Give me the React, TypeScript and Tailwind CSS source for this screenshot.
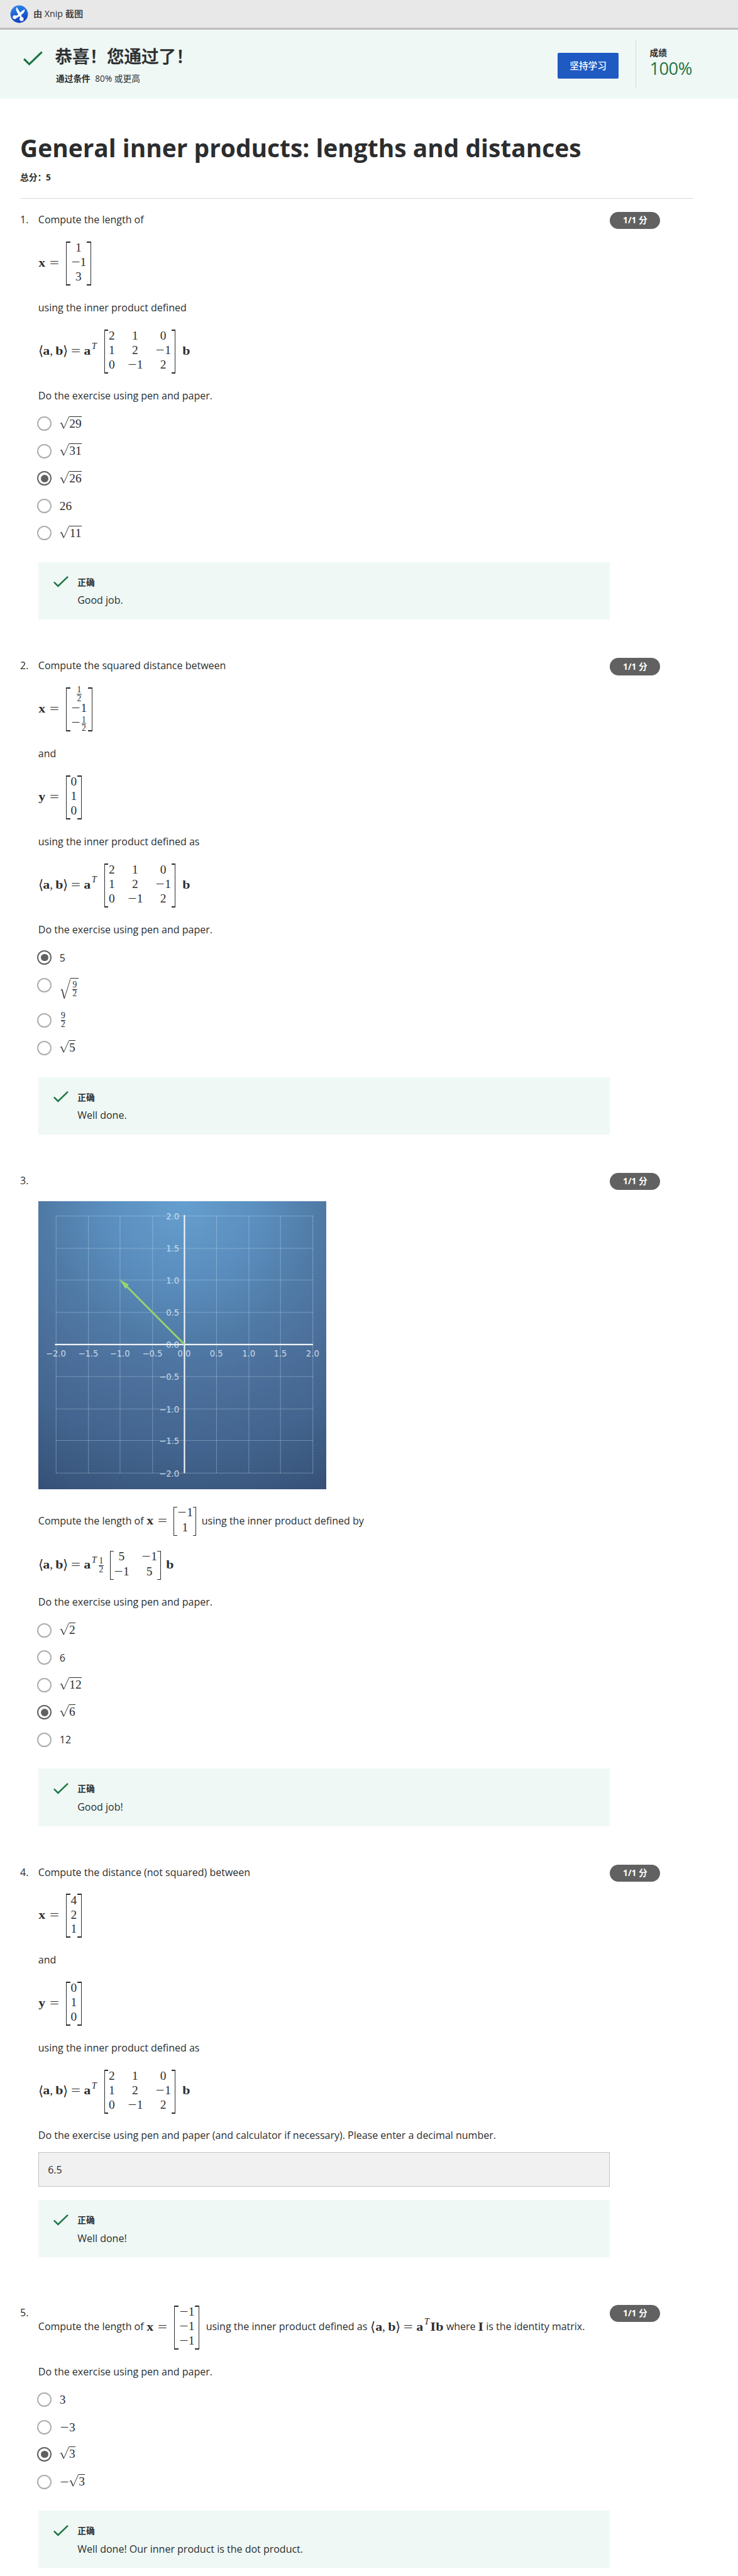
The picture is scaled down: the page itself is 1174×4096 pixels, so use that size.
import type { ReactNode } from 'react';

const SERIF = "font-['Liberation_Serif',serif]";

/* ---------- math primitives ---------- */

function M({ w, children, className = '' }: { w: string; children: ReactNode; className?: string }) {
  return (
    <span className={`${SERIF} ${w} ${className} inline-flex shrink-0 justify-center pb-[3.4px] text-[19.4px] leading-[23px] whitespace-nowrap`}>
      {children}
    </span>
  );
}

function Bold({ children, w = 'w-[12px]', className = '' }: { children: ReactNode; w?: string; className?: string }) {
  return (
    <M w={w} className={`font-bold ${className}`}>
      <span className="inline-block scale-x-[1.13]">{children}</span>
    </M>
  );
}

function Eq({ className = '' }: { className?: string }) {
  return (
    <M w="w-[15.1px]" className={className}>
      <span className="inline-block scale-x-[1.36]">=</span>
    </M>
  );
}

function Minus() {
  return (
    <span className="inline-flex w-[15.1px] shrink-0 justify-center">
      <span className="inline-block scale-x-[1.28]">−</span>
    </span>
  );
}

function Frac({ top, bottom }: { top: string; bottom: string }) {
  return (
    <span className={`${SERIF} inline-flex w-[7.6px] shrink-0 flex-col items-center text-[13.6px] leading-[12px]`}>
      <span className="h-[12.8px]">{top}</span>
      <span className="h-px w-full bg-[#2b2d2f]" />
      <span>{bottom}</span>
    </span>
  );
}

function Cell({ value }: { value: string }) {
  const negative = value.startsWith('-');
  const body = negative ? value.slice(1) : value;
  return (
    <span className="flex items-center justify-center">
      {negative && <Minus />}
      {body === '1/2' ? (
        <span className={`mx-[2px] leading-none ${negative ? 'translate-y-[1.5px]' : '-translate-y-[0.5px]'}`}>
          <span className="flex">
            <Frac top="1" bottom="2" />
          </span>
        </span>
      ) : (
        <span>{body}</span>
      )}
    </span>
  );
}

function Matrix({ rows, small = false, className = '' }: { rows: string[][]; small?: boolean; className?: string }) {
  const cols = rows[0].length;
  const template = cols === 3 ? 'grid-cols-[auto_auto_auto]' : cols === 2 ? 'grid-cols-[auto_auto]' : 'grid-cols-[auto]';
  const side = small ? 'w-[5.6px] border-y-[1.5px]' : 'w-[6.6px] border-y-2';
  return (
    <span className={`${className} inline-flex shrink-0 ${small ? 'h-[46.3px]' : 'h-[70px] gap-[0.8px]'}`}>
      <span className={`${side} border-l-[1.5px] border-[#2b2d2f]`} />
      <span
        className={`${SERIF} ${template} grid ${
          small ? 'auto-rows-[23.8px] gap-x-[19.4px]' : 'auto-rows-[22.9px] gap-x-[19.9px]'
        } content-center pb-[3px] text-[19.4px] leading-[22.9px]`}
      >
        {rows.flat().map((v, i) => (
          <Cell key={i} value={v} />
        ))}
      </span>
      <span className={`${side} border-r-[1.5px] border-[#2b2d2f]`} />
    </span>
  );
}

function Angle({ children }: { children: ReactNode }) {
  return (
    <span className="inline-flex w-[7.5px] shrink-0 justify-center pb-[0.5px] font-['DejaVu_Sans'] text-[21px] leading-[23px] font-extralight">
      {children}
    </span>
  );
}

/* <a, b> = a^T */
function InnerProduct() {
  return (
    <>
      <Angle>⟨</Angle>
      <Bold w="w-[10.8px]">a</Bold>
      <M w="w-[5px]">,</M>
      <Bold w="w-[12.4px]" className="ml-[3.8px]">b</Bold>
      <Angle>⟩</Angle>
      <Eq className="ml-[5.6px]" />
      <Bold w="w-[10.8px]" className="ml-[5.4px]">a</Bold>
      <span className={`${SERIF} inline-flex w-[10.5px] shrink-0 justify-center pb-[18.8px] text-[14.5px] leading-[14px] italic`}>T</span>
    </>
  );
}

function Sqrt({ children, w }: { children: ReactNode; w: string }) {
  return (
    <span className="mb-[4.4px] inline-flex">
      <svg className="h-[20.4px] w-[15px]" viewBox="0 0 15 20.4" fill="none" stroke="#2b2d2f">
        <path d="M0.4 11.6 L2.6 10.2" strokeWidth="0.8" />
        <path d="M2.6 10.2 L6.2 18.8" strokeWidth="1.5" />
        <path d="M6.2 19.6 L14.8 0.5" strokeWidth="0.9" />
      </svg>
      <span className={`${SERIF} ${w} h-[20.4px] border-t border-[#2b2d2f] text-center text-[19.4px] leading-[21.4px]`}>{children}</span>
    </span>
  );
}

function TallSqrt() {
  return (
    <span className="mt-[11px] ml-[1px] inline-flex self-start">
      <svg className="h-[34px] w-[16.6px]" viewBox="0 0 16.6 34" fill="none" stroke="#2b2d2f">
        <path d="M0.4 19.6 L2.6 18" strokeWidth="0.8" />
        <path d="M2.6 18 L6.2 32" strokeWidth="1.5" />
        <path d="M6.2 33.4 L16.4 0.5" strokeWidth="0.9" />
      </svg>
      <span className="flex h-[34px] w-[12.8px] justify-center border-t border-[#2b2d2f] pt-[4px]">
        <Frac top="9" bottom="2" />
      </span>
    </span>
  );
}

function Num({ children }: { children: ReactNode }) {
  return <span className={`${SERIF} inline-flex text-[19.4px] leading-[23px]`}>{children}</span>;
}

/* ---------- page primitives ---------- */

function Check({ className }: { className: string }) {
  return (
    <svg className={className} viewBox="0 0 24 18" fill="none" stroke="#1f7544" strokeWidth="2.5">
      <path d="M0.9 9.6 L7.4 16 L23 0.9" />
    </svg>
  );
}

function P({ children }: { children: ReactNode }) {
  return <p className="h-[24px] text-[16px] leading-[24px] whitespace-nowrap">{children}</p>;
}

function MathLine({ children }: { children: ReactNode }) {
  return <div className="flex h-[70px] items-center">{children}</div>;
}

function VectorEq({ name, rows }: { name: string; rows: string[][] }) {
  return (
    <MathLine>
      <Bold w="w-[12.4px]">{name}</Bold>
      <Eq className="ml-[5.3px]" />
      <Matrix rows={rows} className="ml-[11.5px]" />
    </MathLine>
  );
}

const GRAM = [
  ['2', '1', '0'],
  ['1', '2', '-1'],
  ['0', '-1', '2'],
];

function GramEq() {
  return (
    <MathLine>
      <InnerProduct />
      <Matrix rows={GRAM} className="ml-[10.4px]" />
      <Bold className="ml-[11px]">b</Bold>
    </MathLine>
  );
}

function Question({ n, children, className = '' }: { n: number; children: ReactNode; className?: string }) {
  return (
    <section className={`flex ${className}`}>
      <span className="w-[28.8px] shrink-0 text-[16px] leading-[24px]">{n}.</span>
      <div className="w-[909.5px] shrink-0">{children}</div>
      <span className="flex h-[27.4px] w-[80.2px] shrink-0 items-center justify-center rounded-full bg-[#616161] text-[13.7px] font-bold text-white">
        1/1 分
      </span>
    </section>
  );
}

function Options({ children }: { children: ReactNode }) {
  return <div className="mt-[11.2px]">{children}</div>;
}

function Option({ children, checked = false, h = 'h-[43.5px]' }: { children: ReactNode; checked?: boolean; h?: string }) {
  return (
    <label className={`-ml-[1.4px] flex ${h}`}>
      <span
        className={`mt-[10.3px] flex size-[23px] shrink-0 items-center justify-center rounded-full border-[2.3px] ${
          checked ? 'border-[#616161]' : 'border-[#aeaeae]'
        }`}
      >
        {checked && <span className="size-[11.2px] rounded-full bg-[#616161]" />}
      </span>
      <span className="ml-[12.4px] flex h-[43.5px] items-center text-[16px]">{children}</span>
    </label>
  );
}

function Feedback({ children, className = 'mt-[24.2px]' }: { children: ReactNode; className?: string }) {
  return (
    <div className={`flex h-[91.4px] bg-[#eff8f5] pl-[24.4px] ${className}`}>
      <Check className="mt-[22.6px] h-[18px] w-[24px]" />
      <div className="ml-[14px] pt-[20px]">
        <p className="h-[24px] text-[13.7px] leading-[24px] font-bold">正确</p>
        <p className="mt-[4.6px] text-[16px] leading-[24px]">{children}</p>
      </div>
    </div>
  );
}

/* ---------- vector plot ---------- */

const XS = [90, 254, 414, 579, 740, 903, 1067, 1227, 1391];
const YS = [75, 239, 399, 563, 726, 888, 1052, 1212, 1377];
const X_LABELS = ['−2.0', '−1.5', '−1.0', '−0.5', '0.0', '0.5', '1.0', '1.5', '2.0'];
const Y_LABELS = ['2.0', '1.5', '1.0', '0.5', '0.0', '−0.5', '−1.0', '−1.5', '−2.0'];

function Plot() {
  return (
    <svg className="block size-[458px]" viewBox="0 0 1459 1459">
      <defs>
        <radialGradient id="sky" cx="0.5" cy="0" r="1.13">
          <stop offset="0" stopColor="#659fcf" />
          <stop offset="0.25" stopColor="#5a8dbd" />
          <stop offset="0.42" stopColor="#507ba7" />
          <stop offset="0.55" stopColor="#4d719d" />
          <stop offset="0.75" stopColor="#43658f" />
          <stop offset="0.9" stopColor="#3b5980" />
          <stop offset="1" stopColor="#354e77" />
        </radialGradient>
      </defs>
      <rect width="1459" height="1459" fill="url(#sky)" />
      <g stroke="#d5e3f2" strokeOpacity="0.65" strokeWidth="3.4" strokeDasharray="4 4">
        {XS.map((x) => (
          <line key={x} x1={x} x2={x} y1="75" y2="1377" />
        ))}
        {YS.map((y) => (
          <line key={y} x1="90" x2="1391" y1={y} y2={y} />
        ))}
      </g>
      <g fill="#dbe6f3" fillOpacity="0.9" fontFamily="DejaVu Sans" fontSize="42">
        {XS.map((x, i) => (
          <text key={x} x={x - 1} y="788" textAnchor="middle">
            {X_LABELS[i]}
          </text>
        ))}
        {YS.map((y, i) => (
          <text key={y} x="714" y={y + 17} textAnchor="end">
            {Y_LABELS[i]}
          </text>
        ))}
      </g>
      <line x1="740.5" x2="740.5" y1="70" y2="1378" stroke="#f1f5fa" strokeWidth="7" />
      <line x1="84" x2="1392" y1="726" y2="726" stroke="#f1f5fa" strokeWidth="7" />
      <line x1="740" y1="725" x2="440" y2="424" stroke="#99d46f" strokeWidth="9" />
      <polygon points="414,399 457,421 450,433 441,443" fill="#99d46f" stroke="#99d46f" strokeWidth="1" />
    </svg>
  );
}

function XnipLogo() {
  return (
    <svg className="size-[29px]" viewBox="-1 -1 50 50">
      <defs>
        <linearGradient id="xnip" x1="0" y1="0" x2="0.3" y2="1">
          <stop offset="0" stopColor="#2f8cf0" />
          <stop offset="1" stopColor="#1244c0" />
        </linearGradient>
      </defs>
      <circle cx="24" cy="24" r="24" fill="url(#xnip)" />
      <path d="M17 5.2 C14.4 9 15 16 21.5 24 L27 33 L31 31 C29.5 24 24.5 15 17 5.2 Z" fill="#fff" />
      <path d="M39.2 10.8 C40 16 37 21 31 25 L18 34.5 L14.5 29.5 L23 23.5 C28 18 33 14 39.2 10.8 Z" fill="#fff" />
      <circle cx="11.8" cy="32.2" r="5.3" fill="#fff" />
      <circle cx="30.6" cy="37.4" r="5.5" fill="#fff" />
    </svg>
  );
}

export default function App() {
  return (
    <div className="h-[4096px] w-[1174px] overflow-hidden bg-white font-['Open_Sans','Noto_Sans_CJK_SC',sans-serif] text-[#2b2d2f]">
      <div className="flex h-[44px] items-center bg-[#e8e8e8] pl-[16px]">
        <XnipLogo />
        <span className="ml-[8px] text-[14.2px] font-medium">由 Xnip 截图</span>
      </div>
      <div className="h-[2px] bg-[#c3c3c3]" />
      <div className="h-px bg-[#a9a9a9]" />

      <header className="flex h-[110px] bg-[#eff8f5] pl-[37px]">
        <Check className="mt-[33.5px] h-[24px] w-[31px]" />
        <div className="ml-[19.5px] w-[799.5px] pt-[24px]">
          <h2 className="h-[38px] text-[27.5px] leading-[38px] font-medium [-webkit-text-stroke:0.5px_#2b2d2f]">恭喜！您通过了！</h2>
          <p className="mt-[4px] ml-[1.5px] flex h-[24px] gap-[7.5px] text-[13.7px] leading-[24px]">
            <b>通过条件</b>
            <span>80% 或更高</span>
          </p>
        </div>
        <button className="mt-[36.6px] h-[41.2px] w-[97.2px] rounded-[2px] bg-[#1f5ac2] text-[14.7px] font-medium text-white">
          坚持学习
        </button>
        <div className="mt-[16px] ml-[27.3px] h-[77.8px] w-px bg-[#d8dcdb]" />
        <div className="ml-[21px] pt-[24.5px]">
          <p className="h-[24px] text-[13.7px] leading-[24px] font-bold">成绩</p>
          <p className="h-[30px] text-[27.4px] leading-[26px] tracking-[-0.6px] text-[#1f7544]">100%</p>
        </div>
      </header>

      <main className="pl-[32px]">
        <h1 className="mt-[54px] h-[48px] text-[38.9px] leading-[48px] font-bold whitespace-nowrap">
          General inner products: lengths and distances
        </h1>
        <p className="mt-[11px] h-[24px] text-[13.7px] leading-[24px] font-bold">总分：5</p>
        <div className="mt-[20.5px] h-px w-[1071px] bg-[#d9d9d9]" />

        <Question n={1} className="mt-[21.3px]">
          <div className="flex flex-col gap-[23.05px]">
            <P>Compute the length of</P>
            <VectorEq name="x" rows={[['1'], ['-1'], ['3']]} />
            <P>using the inner product defined</P>
            <GramEq />
            <P>Do the exercise using pen and paper.</P>
          </div>
          <Options>
            <Option><Sqrt w="w-[20.4px]">29</Sqrt></Option>
            <Option><Sqrt w="w-[20.4px]">31</Sqrt></Option>
            <Option checked><Sqrt w="w-[20.4px]">26</Sqrt></Option>
            <Option><Num>26</Num></Option>
            <Option><Sqrt w="w-[20.4px]">11</Sqrt></Option>
          </Options>
          <Feedback>Good job.</Feedback>
        </Question>

        <Question n={2} className="mt-[61px]">
          <div className="flex flex-col gap-[22.9px]">
            <P>Compute the squared distance between</P>
            <VectorEq name="x" rows={[['1/2'], ['-1'], ['-1/2']]} />
            <P>and</P>
            <VectorEq name="y" rows={[['0'], ['1'], ['0']]} />
            <P>using the inner product defined as</P>
            <GramEq />
            <P>Do the exercise using pen and paper.</P>
          </div>
          <Options>
            <Option checked>5</Option>
            <Option h="h-[56.1px]"><TallSqrt /></Option>
            <Option h="h-[44.6px]"><span className="ml-[1.8px] flex"><Frac top="9" bottom="2" /></span></Option>
            <Option><Sqrt w="w-[10.2px]">5</Sqrt></Option>
          </Options>
          <Feedback>Well done.</Feedback>
        </Question>

        <Question n={3} className="mt-[60.6px]">
          <div className="pt-[45.5px]">
            <Plot />
          </div>
          <div className="mt-[27.9px] flex h-[46.3px] items-center text-[16px] whitespace-nowrap">
            <span className="w-[172.4px] pb-[2px] leading-[24px]">Compute the length of</span>
            <Bold>x</Bold>
            <Eq className="ml-[5.6px]" />
            <Matrix small rows={[['-1'], ['1']]} className="ml-[10.6px]" />
            <span className="ml-[8.3px] pb-[2px] leading-[24px]">using the inner product defined by</span>
          </div>
          <div className="mt-[23.5px] flex h-[46.3px] items-center">
            <InnerProduct />
            <span className="ml-[2px] flex"><Frac top="1" bottom="2" /></span>
            <Matrix small rows={[['5', '-1'], ['-1', '5']]} className="ml-[10.6px]" />
            <Bold className="ml-[8.6px]">b</Bold>
          </div>
          <div className="mt-[23.3px]">
            <P>Do the exercise using pen and paper.</P>
          </div>
          <Options>
            <Option><Sqrt w="w-[10.2px]">2</Sqrt></Option>
            <Option>6</Option>
            <Option><Sqrt w="w-[20.4px]">12</Sqrt></Option>
            <Option checked><Sqrt w="w-[10.2px]">6</Sqrt></Option>
            <Option>12</Option>
          </Options>
          <Feedback>Good job!</Feedback>
        </Question>

        <Question n={4} className="mt-[61px]">
          <div className="flex flex-col gap-[22.8px]">
            <P>Compute the distance (not squared) between</P>
            <VectorEq name="x" rows={[['4'], ['2'], ['1']]} />
            <P>and</P>
            <VectorEq name="y" rows={[['0'], ['1'], ['0']]} />
            <P>using the inner product defined as</P>
            <GramEq />
            <P>Do the exercise using pen and paper (and calculator if necessary). Please enter a decimal number.</P>
          </div>
          <div className="mt-[14.8px] flex h-[55px] items-center border border-[#c4c4c4] bg-[#f1f1f1] pl-[14.4px] text-[16px]">6.5</div>
          <Feedback className="mt-[20.8px]">Well done!</Feedback>
        </Question>

        <Question n={5} className="mt-[75.2px]">
          <div className="flex h-[71.2px] items-center pt-[1px] text-[16px] whitespace-nowrap">
            <span className="w-[172.4px] pb-[3.6px] leading-[24px]">Compute the length of</span>
            <Bold>x</Bold>
            <Eq className="ml-[5.6px]" />
            <Matrix rows={[['-1'], ['-1'], ['-1']]} className="ml-[11.4px]" />
            <span className="ml-[10.8px] w-[262px] pb-[3.6px] leading-[24px]">using the inner product defined as</span>
            <InnerProduct />
            <Bold w="w-[8.5px]" className="ml-[0.6px]">I</Bold>
            <Bold w="w-[12.4px]">b</Bold>
            <span className="ml-[4.4px] w-[50.4px] pb-[3.6px] leading-[24px]">where</span>
            <Bold w="w-[8.5px]">I</Bold>
            <span className="ml-[4.4px] pb-[3.6px] leading-[24px]">is the identity matrix.</span>
          </div>
          <div className="mt-[22.9px]">
            <P>Do the exercise using pen and paper.</P>
          </div>
          <Options>
            <Option><Num>3</Num></Option>
            <Option><Num><Minus />3</Num></Option>
            <Option checked><Sqrt w="w-[10.2px]">3</Sqrt></Option>
            <Option><Num><Minus /></Num><Sqrt w="w-[10.2px]">3</Sqrt></Option>
          </Options>
          <Feedback>Well done! Our inner product is the dot product.</Feedback>
        </Question>
      </main>
    </div>
  );
}
